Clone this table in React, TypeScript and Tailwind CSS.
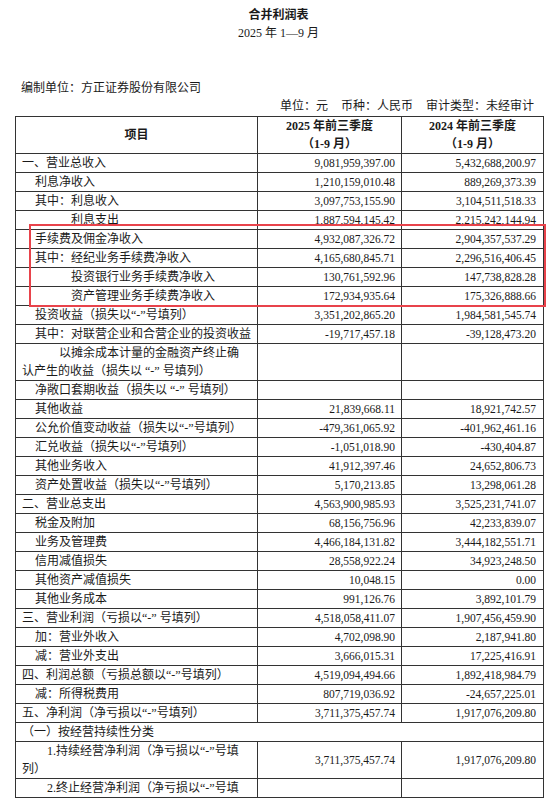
import React from "react";

type Row = {
  t: React.ReactNode;
  pl?: number; // left indent px (absolute from cell edge)
  a?: string;
  b?: string;
  h?: number;
  span?: boolean;
};

const Q = "“-”";

const rows: Row[] = [
  { t: "一、营业总收入", pl: 6, a: "9,081,959,397.00", b: "5,432,688,200.97" },
  { t: "利息净收入", pl: 19, a: "1,210,159,010.48", b: "889,269,373.39" },
  { t: "其中：利息收入", pl: 19, a: "3,097,753,155.90", b: "3,104,511,518.33" },
  { t: "利息支出", pl: 55, a: "1,887,594,145.42", b: "2,215,242,144.94" },
  { t: "手续费及佣金净收入", pl: 19, a: "4,932,087,326.72", b: "2,904,357,537.29" },
  { t: "其中：经纪业务手续费净收入", pl: 19, a: "4,165,680,845.71", b: "2,296,516,406.45" },
  { t: "投资银行业务手续费净收入", pl: 55, a: "130,761,592.96", b: "147,738,828.28" },
  { t: "资产管理业务手续费净收入", pl: 55, a: "172,934,935.64", b: "175,326,888.66" },
  { t: `投资收益（损失以${Q}号填列）`, pl: 19, a: "3,351,202,865.20", b: "1,984,581,545.74" },
  { t: "其中：对联营企业和合营企业的投资收益", pl: 19, a: "-19,717,457.18", b: "-39,128,473.20" },
  {
    t: (
      <>
        <span className="pl-[37px]">以摊余成本计量的金融资产终止确</span>
        <br />
        认产生的收益（损失以 {Q} 号填列）
      </>
    ),
    pl: 6,
    h: 37,
  },
  { t: `净敞口套期收益（损失以 ${Q} 号填列）`, pl: 19 },
  { t: "其他收益", pl: 19, a: "21,839,668.11", b: "18,921,742.57" },
  { t: `公允价值变动收益（损失以${Q}号填列）`, pl: 19, a: "-479,361,065.92", b: "-401,962,461.16" },
  { t: `汇兑收益（损失以${Q}号填列）`, pl: 19, a: "-1,051,018.90", b: "-430,404.87" },
  { t: "其他业务收入", pl: 19, a: "41,912,397.46", b: "24,652,806.73" },
  { t: `资产处置收益（损失以${Q}号填列）`, pl: 19, a: "5,170,213.85", b: "13,298,061.28" },
  { t: "二、营业总支出", pl: 6, a: "4,563,900,985.93", b: "3,525,231,741.07" },
  { t: "税金及附加", pl: 19, a: "68,156,756.96", b: "42,233,839.07" },
  { t: "业务及管理费", pl: 19, a: "4,466,184,131.82", b: "3,444,182,551.71" },
  { t: "信用减值损失", pl: 19, a: "28,558,922.24", b: "34,923,248.50" },
  { t: "其他资产减值损失", pl: 19, a: "10,048.15", b: "0.00" },
  { t: "其他业务成本", pl: 19, a: "991,126.76", b: "3,892,101.79" },
  { t: `三、营业利润（亏损以${Q} 号填列）`, pl: 6, a: "4,518,058,411.07", b: "1,907,456,459.90" },
  { t: "加：营业外收入", pl: 19, a: "4,702,098.90", b: "2,187,941.80" },
  { t: "减：营业外支出", pl: 19, a: "3,666,015.31", b: "17,225,416.91" },
  { t: `四、利润总额（亏损总额以${Q}号填列）`, pl: 6, a: "4,519,094,494.66", b: "1,892,418,984.79" },
  { t: "减：所得税费用", pl: 19, a: "807,719,036.92", b: "-24,657,225.01" },
  { t: `五、净利润（净亏损以${Q}号填列）`, pl: 6, a: "3,711,375,457.74", b: "1,917,076,209.80" },
  { t: "（一）按经营持续性分类", pl: 6, span: true },
  {
    t: (
      <>
        <span className="pl-[25px]">1.持续经营净利润（净亏损以{Q}号填</span>
        <br />
        列）
      </>
    ),
    pl: 6,
    a: "3,711,375,457.74",
    b: "1,917,076,209.80",
    h: 37,
  },
  { t: `2.终止经营净利润（净亏损以${Q}号填`, pl: 31, h: 18 },
];

const font = "font-['Liberation_Serif','Noto_Sans_CJK_SC',serif]";

export default function App() {
  return (
    <div className={`relative w-[554px] h-[803px] overflow-hidden bg-white text-[#1a1a1a] ${font}`}>
      <div className="pt-[6px] text-center text-[12px] leading-[18px] font-bold pl-[3px]">合并利润表</div>
      <div className="text-center text-[12px] leading-[18px] pl-[3px]">2025 年 1—9 月</div>
      <div className="mt-[37px] pl-[21px] text-[12px] leading-[18px]">编制单位：方正证券股份有限公司</div>
      <div className="flex justify-end pr-[20px] text-[12px] leading-[18px] h-[19px]">
        <span>单位：元</span>
        <span className="ml-[13px]">币种：人民币</span>
        <span className="ml-[13px]">审计类型：未经审计</span>
      </div>
      <table className="ml-[15px] w-[528px] table-fixed border-collapse text-[12px]">
        <colgroup>
          <col className="w-[242px]" />
          <col className="w-[144px]" />
          <col className="w-[142px]" />
        </colgroup>
        <thead>
          <tr>
            <th className="h-[37px] border border-[#333] text-center font-bold leading-[18px] p-0">项目</th>
            <th className="h-[37px] border border-[#333] text-center font-bold leading-[18px] p-0">
              2025 年前三季度
              <br />
              （1-9 月）
            </th>
            <th className="h-[37px] border border-[#333] text-center font-bold leading-[18px] p-0">
              2024 年前三季度
              <br />
              （1-9 月）
            </th>
          </tr>
        </thead>
        <tbody>
          {rows.map((r, i) => {
            const h = r.h ?? 19;
            if (r.span) {
              return (
                <tr key={i}>
                  <td
                    colSpan={3}
                    className="border border-[#333] p-0 whitespace-nowrap leading-[18px] align-middle"
                    style={{ height: h, paddingLeft: r.pl }}
                  >
                    {r.t}
                  </td>
                </tr>
              );
            }
            return (
              <tr key={i}>
                <td
                  className="border border-[#333] p-0 whitespace-nowrap overflow-hidden leading-[18px] align-middle"
                  style={{ height: h, paddingLeft: r.pl }}
                >
                  {r.t}
                </td>
                <td className="border border-[#333] p-0 pr-[6px] text-right text-[11.5px] leading-[18px] align-middle">
                  {r.a}
                </td>
                <td className="border border-[#333] p-0 pr-[7px] text-right text-[11.5px] leading-[18px] align-middle">
                  {r.b}
                </td>
              </tr>
            );
          })}
        </tbody>
      </table>
      <div className="absolute left-[29px] top-[224px] w-[517px] h-[83px] border-2 border-[#e8434b] pointer-events-none" />
    </div>
  );
}
